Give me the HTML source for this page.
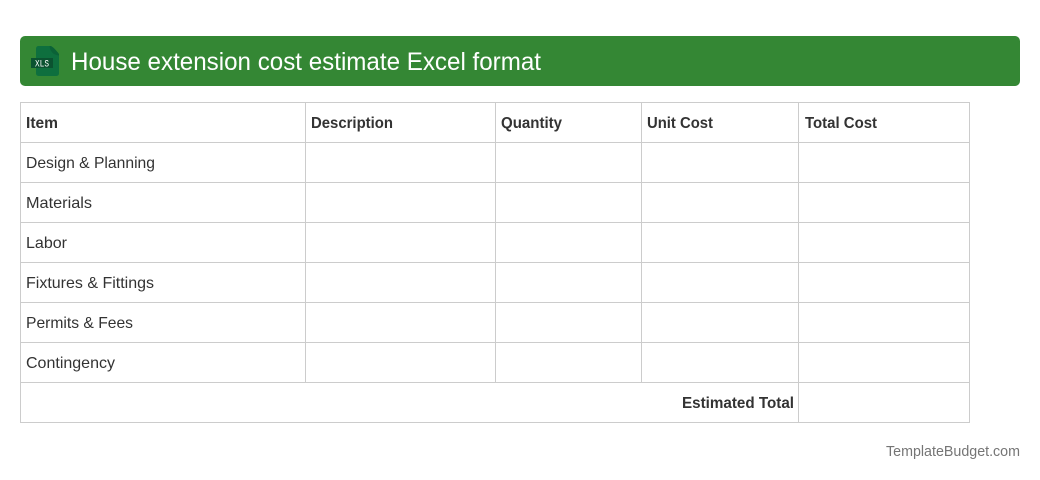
<!DOCTYPE html>
<html lang="en">
<head>
<meta charset="utf-8">
<title>House extension cost estimate Excel format</title>
<style>
html,body{margin:0;padding:0;background:#fff;width:1040px;height:480px;overflow:hidden}
svg{display:block}
text{font-family:"Liberation Sans",Arial,sans-serif;fill:#333;font-size:16px}
.b{font-weight:700}
</style>
</head>
<body>
<svg width="1040" height="480" viewBox="0 0 1040 480" xmlns="http://www.w3.org/2000/svg">
<rect x="20" y="36" width="1000" height="50" rx="5" fill="#348734"/>
<path d="M38.500 46H49.500L59 55.500V73.500A2.500 2.500 0 0 1 56.500 76H38.500A2.500 2.500 0 0 1 36 73.500V48.500A2.500 2.500 0 0 1 38.500 46Z" fill="#0e6f3e"/>
<path d="M49.500 46C50 51 53 55 59 55.500L59 54C56 50 53 47 51 46Z" fill="#0b6237"/>
<rect x="31" y="58" width="22" height="10" fill="#0b5230"/>
<text x="35" y="66.500" style="font-family:'Liberation Mono',monospace;font-size:10px;fill:#fff" textLength="14" lengthAdjust="spacingAndGlyphs">XLS</text>
<text x="71" y="70" style="font-size:25px;fill:#fff" textLength="470" lengthAdjust="spacingAndGlyphs">House extension cost estimate Excel format</text>
<g fill="#ccc">
<rect x="20" y="102" width="950" height="1"/>
<rect x="20" y="142" width="950" height="1"/>
<rect x="20" y="182" width="950" height="1"/>
<rect x="20" y="222" width="950" height="1"/>
<rect x="20" y="262" width="950" height="1"/>
<rect x="20" y="302" width="950" height="1"/>
<rect x="20" y="342" width="950" height="1"/>
<rect x="20" y="382" width="950" height="1"/>
<rect x="20" y="422" width="950" height="1"/>
<rect x="20" y="102" width="1" height="321"/>
<rect x="969" y="102" width="1" height="321"/>
<rect x="798" y="102" width="1" height="321"/>
<rect x="305" y="102" width="1" height="281"/>
<rect x="495" y="102" width="1" height="281"/>
<rect x="641" y="102" width="1" height="281"/>
</g>
<text class="b" x="26" y="128" textLength="32" lengthAdjust="spacingAndGlyphs">Item</text>
<text class="b" x="311" y="128" textLength="82" lengthAdjust="spacingAndGlyphs">Description</text>
<text class="b" x="501" y="128" textLength="61" lengthAdjust="spacingAndGlyphs">Quantity</text>
<text class="b" x="647" y="128" textLength="66" lengthAdjust="spacingAndGlyphs">Unit Cost</text>
<text class="b" x="805" y="128" textLength="72" lengthAdjust="spacingAndGlyphs">Total Cost</text>
<text x="26" y="168" textLength="129" lengthAdjust="spacingAndGlyphs">Design &amp; Planning</text>
<text x="26" y="208" textLength="66" lengthAdjust="spacingAndGlyphs">Materials</text>
<text x="26" y="248" textLength="41" lengthAdjust="spacingAndGlyphs">Labor</text>
<text x="26" y="288" textLength="128" lengthAdjust="spacingAndGlyphs">Fixtures &amp; Fittings</text>
<text x="26" y="328" textLength="107" lengthAdjust="spacingAndGlyphs">Permits &amp; Fees</text>
<text x="26" y="368" textLength="89" lengthAdjust="spacingAndGlyphs">Contingency</text>
<text class="b" x="682" y="408" textLength="112" lengthAdjust="spacingAndGlyphs">Estimated Total</text>
<text x="886" y="456" style="font-size:14.500px;fill:#757575" textLength="134" lengthAdjust="spacingAndGlyphs">TemplateBudget.com</text>
</svg>
</body>
</html>
